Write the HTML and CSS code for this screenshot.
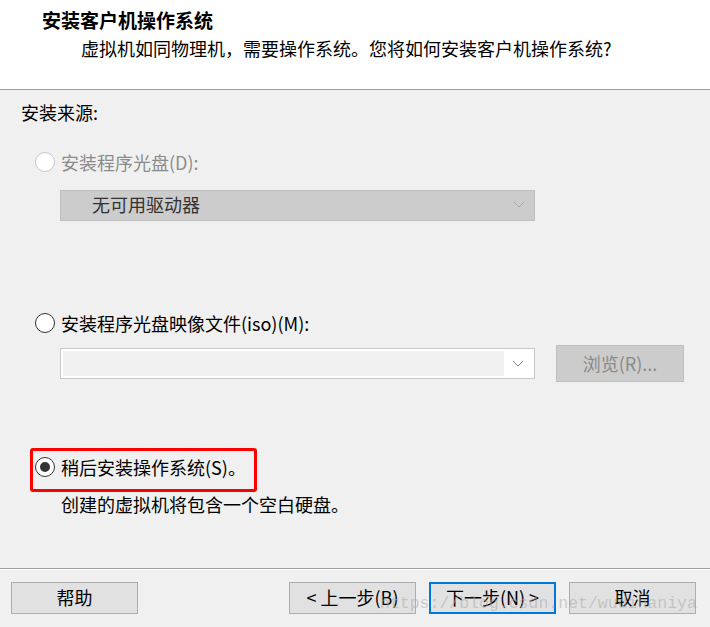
FILE: index.html
```html
<!DOCTYPE html>
<html>
    <head>
        <meta charset="utf-8">
        <title>新建虚拟机向导</title>

        <link rel="stylesheet" href="styles.css">
    </head>
    <body>
        <div class="wizard">
            <div class="header">
                <div class="title">安装客户机操作系统</div>
                <div class="subtitle">虚拟机如同物理机，需要操作系统。您将如何安装客户机操作系统?</div>
            </div>

            <div class="content">
                <div class="group-label">安装来源:</div>

                <div class="option option-cd disabled">
                    <span class="radio"></span>
                    <span class="option-text">安装程序光盘(D):</span>
                </div>
                <div class="select">
                    <span>无可用驱动器</span>
                    <svg class="chevron" width="12" height="7" viewBox="0 0 12 7"><path d="M1 1 L6 6 L11 1" fill="none" stroke="#a8a8a8" stroke-width="1"/></svg>
                </div>

                <div class="option option-iso">
                    <span class="radio"></span>
                    <span class="option-text">安装程序光盘映像文件(iso)(M):</span>
                </div>
                <div class="iso-row">
                    <div class="combo">
                        <div class="combo-field"></div>
                        <div class="combo-arrow">
                            <svg width="12" height="7" viewBox="0 0 12 7"><path d="M1 1 L6 6 L11 1" fill="none" stroke="#8a8a8a" stroke-width="1"/></svg>
                        </div>
                    </div>
                    <div class="browse">浏览(R)...</div>
                </div>

                <div class="option option-later">
                    <span class="radio checked"></span>
                    <span class="option-text">稍后安装操作系统(S)。</span>
                </div>
                <div class="desc">创建的虚拟机将包含一个空白硬盘。</div>
            </div>

            <div class="footer">
                <div class="btn">帮助</div>
                <div class="btn-group">
                    <div class="btn">&lt; 上一步(B)</div>
                    <div class="btn btn-default">下一步(N) &gt;</div>
                    <div class="btn">取消</div>
                </div>
            </div>
        </div>

        <div class="watermark">https://blog.csdn.net/wudihaniya</div>
    </body>
</html>
```

FILE: styles.css
```css
html, body {
    height: 627px;
}
body {
    margin: 0;
    background-color: #f0f0f0;
    font-family: "Noto Sans CJK SC", sans-serif;
    font-size: 18px;
    line-height: 24px;
    color: #000;
    overflow: hidden;
}
.wizard {
    display: flex;
    flex-direction: column;
    height: 627px;
}

/* top white banner */
.header {
    box-sizing: border-box;
    height: 90px;
    padding-top: 8px;
    padding-left: 42px;
    background-color: #fff;
    border-bottom: 1px solid #a0a0a0;
}
.title {
    font-size: 19px;
    font-weight: bold;
}
.subtitle {
    margin-top: 4px;
    padding-left: 39px;
}

.content {
    flex: 1;
    padding: 10px 0 0 21px;
}
.option {
    display: flex;
    align-items: center;
    gap: 6px;
    margin-left: 14px;
    height: 24px;
}
.option.disabled .option-text {
    color: #8c8c8c;
}
.option-cd {
    margin-top: 26px;
}
.option-iso {
    margin-top: 90px;
}
.option-later {
    position: relative;
    width: fit-content;
    margin-top: 73px;
}
/* red annotation box */
.option-later::after {
    content: "";
    position: absolute;
    left: -5px;
    top: -7px;
    width: 227px;
    height: 44px;
    box-sizing: border-box;
    border: 3px solid #ff0000;
    border-radius: 3px;
}

.radio {
    box-sizing: border-box;
    width: 20px;
    height: 20px;
    border-radius: 50%;
    border: 1.5px solid #333;
    background-color: #fff;
    display: flex;
    align-items: center;
    justify-content: center;
}
.disabled .radio {
    border-color: #c6c6c6;
}
.radio.checked::after {
    content: "";
    width: 10px;
    height: 10px;
    border-radius: 50%;
    background-color: #333;
}

.select {
    box-sizing: border-box;
    display: flex;
    align-items: center;
    justify-content: space-between;
    width: 475px;
    height: 31px;
    margin-top: 16px;
    margin-left: 39px;
    padding: 0 9px 3px 31px;
    background-color: #cccccc;
    border: 1px solid #bfbfbf;
    color: #333;
}

.iso-row {
    display: flex;
    align-items: center;
    margin-top: 10px;
    margin-left: 39px;
}
.combo {
    box-sizing: border-box;
    display: flex;
    width: 475px;
    height: 31px;
    padding: 2px;
    background-color: #fff;
    border: 1px solid #c8c8c8;
}
.combo-field {
    flex: 1;
    background-color: #f0f0f0;
}
.combo-arrow {
    width: 28px;
    display: flex;
    align-items: center;
    justify-content: center;
}
.browse {
    box-sizing: border-box;
    width: 128px;
    height: 37px;
    margin-left: 21px;
    padding-bottom: 2px;
    display: flex;
    align-items: center;
    justify-content: center;
    background-color: #cccccc;
    border: 1px solid #bfbfbf;
    color: #8a8a8a;
}

.desc {
    margin-top: 13px;
    margin-left: 40px;
}

.footer {
    box-sizing: border-box;
    height: 59px;
    padding: 13px 14px 0 11px;
    display: flex;
    justify-content: space-between;
    align-items: flex-start;
    border-top: 1px solid #a0a0a0;
    box-shadow: inset 0 1px 0 #fff;
}
.btn-group {
    display: flex;
    gap: 13px;
}
.btn {
    box-sizing: border-box;
    width: 127px;
    height: 32px;
    padding-bottom: 2px;
    display: flex;
    align-items: center;
    justify-content: center;
    background-color: #e1e1e1;
    border: 1px solid #adadad;
}
.btn-default {
    border: 2px solid #0078d7;
}

.watermark {
    position: absolute;
    left: 380px;
    top: 592px;
    font-family: "Liberation Mono", monospace;
    font-size: 16.5px;
    color: rgba(170, 170, 170, 0.55);
    pointer-events: none;
}
```
